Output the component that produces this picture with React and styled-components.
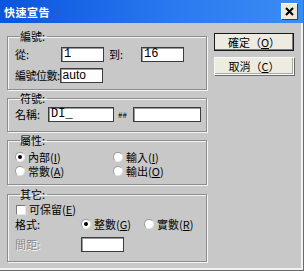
import React from 'react'
import styled, { createGlobalStyle } from 'styled-components'

const Global = createGlobalStyle`
  html, body { margin: 0; padding: 0; background: #c8c8c8; }
  body { font-family: "Noto Sans CJK TC", "Liberation Sans", sans-serif; font-size: 11px; color: #000; }
`

const Window = styled.div`
  width: 304px;
  height: 271px;
  display: flex;
  flex-direction: column;
  background: #c8c8c8;
  box-sizing: border-box;
  border-right: 1px solid #6a6a6a;
  border-bottom: 1px solid #6a6a6a;
  box-shadow: inset -2px -2px 0 #f2f2f2;
  overflow: hidden;
`

const TitleBar = styled.div`
  height: 23px;
  flex: none;
  display: flex;
  align-items: center;
  justify-content: space-between;
  padding: 0 5px 0 4px;
  background: linear-gradient(to right, #0b54de, #2a7cf0 60%, #3b8cf4);
`

const Title = styled.span`
  color: #fff;
  font-weight: bold;
  font-size: 11px;
  letter-spacing: 0.5px;
`

const CloseBtn = styled.div`
  width: 15px;
  height: 15px;
  background: #ece9d8;
  border: 1px solid #fff;
  border-right-color: #404040;
  border-bottom-color: #404040;
  display: flex;
  align-items: center;
  justify-content: center;
`

const Body = styled.div`
  flex: 1;
  display: flex;
  padding: 7px 0 0 7px;
  gap: 7px;
`

const Left = styled.div`
  width: 200px;
  display: flex;
  flex-direction: column;
`

const Group = styled.fieldset`
  margin: ${p => p.$mt || 0}px 0 0 0;
  padding: ${p => p.$pt || 0}px 7px ${p => p.$pb || 0}px 7px;
  border: 1px solid #8c8c8c;
  box-shadow: 1px 1px 0 #f4f4f4, inset 1px 1px 0 #f4f4f4;
  min-width: 0;
  display: flex;
  flex-direction: column;
  gap: ${p => p.$gap || 0}px;
`

const Legend = styled.legend`
  padding: 0 2px 0 0;
  margin-left: 5px;
  line-height: 13px;
  font-size: 11px;
`

const Row = styled.div`
  display: flex;
  align-items: center;
  height: ${p => p.$h || 15}px;
`

const Label = styled.span`
  width: ${p => (p.$w ? `${p.$w}px` : 'auto')};
  flex: none;
  white-space: nowrap;
  line-height: 13px;
  font-size: ${p => p.$fs || 11}px;
  letter-spacing: ${p => p.$ls || 0}px;
  margin-left: ${p => p.$ml || 0}px;
  color: ${p => (p.$disabled ? '#8a8a8a' : '#000')};
  text-shadow: ${p => (p.$disabled ? '1px 1px 0 #f4f4f4' : 'none')};
`

const Input = styled.div`
  width: ${p => p.$w}px;
  height: 15px;
  box-sizing: border-box;
  background: #fff;
  border: 1px solid #3c3c3c;
  box-shadow: inset 1px 1px 0 #9a9a9a;
  padding-left: 2px;
  font-family: ${p => (p.$sans ? '"Liberation Sans", sans-serif' : '"Liberation Mono", monospace')};
  font-size: 12px;
  line-height: 13px;
  flex: none;
`

const RadioItem = styled.div`
  display: flex;
  align-items: center;
  width: ${p => (p.$w ? `${p.$w}px` : 'auto')};
  flex: none;
  white-space: nowrap;
  line-height: 13px;
`

const RadioDot = styled.span`
  width: 10px;
  height: 10px;
  border-radius: 50%;
  box-sizing: border-box;
  background: #fff;
  border: 1px solid #9a9a9a;
  border-right-color: #e8e8e8;
  border-bottom-color: #e8e8e8;
  margin-right: 3px;
  display: flex;
  align-items: center;
  justify-content: center;
  flex: none;
  &::after {
    content: '';
    width: 4px;
    height: 4px;
    border-radius: 50%;
    background: ${p => (p.$on ? '#000' : 'transparent')};
  }
`

const Check = styled.span`
  width: 10px;
  height: 10px;
  box-sizing: border-box;
  background: #fff;
  border: 1px solid #7a7a7a;
  border-right-color: #e8e8e8;
  border-bottom-color: #e8e8e8;
  margin: 0 3px 0 1px;
  flex: none;
`

const Text = styled.span`
  line-height: 13px;
  white-space: nowrap;
`

const Right = styled.div`
  width: 80px;
  display: flex;
  flex-direction: column;
  gap: 6px;
  padding-top: 3px;
`

const Button = styled.div`
  height: 18px;
  box-sizing: border-box;
  background: #eeebe0;
  border: 1px solid ${p => (p.$default ? '#1a1a1a' : '#f8f8f8')};
  box-shadow: ${p => (p.$default ? 'inset -1px -1px 0 #7a7a7a' : '1px 1px 0 #6a6a6a, inset -1px -1px 0 #a8a8a8')};
  display: flex;
  align-items: center;
  justify-content: center;
  line-height: 13px;
  white-space: nowrap;
`

const Radio = ({ on, w, children }) => (
  <RadioItem $w={w}>
    <RadioDot $on={on} />
    <Text>{children}</Text>
  </RadioItem>
)

export default function App() {
  return (
    <>
      <Global />
      <Window>
        <TitleBar>
          <Title>快速宣告</Title>
          <CloseBtn>
            <svg width="9" height="9" viewBox="0 0 9 9">
              <path d="M1 1 L8 8 M8 1 L1 8" stroke="#000" strokeWidth="2" />
            </svg>
          </CloseBtn>
        </TitleBar>
        <Body>
          <Left>
            <Group $pt={4} $pb={6} $gap={6}>
              <Legend>編號:</Legend>
              <Row>
                <Label $w={46}>從:</Label>
                <Input $w={43}>1</Input>
                <Label $w={32} $ml={5}>到:</Label>
                <Input $w={43}>16</Input>
              </Row>
              <Row>
                <Label $ls={-0.5}>編號位數:</Label>
                <Input $w={43} $sans>auto</Input>
              </Row>
            </Group>
            <Group $mt={2} $pt={2} $pb={9}>
              <Legend>符號:</Legend>
              <Row>
                <Label $w={33}>名稱:</Label>
                <Input $w={66}>DI_</Input>
                <Label $w={15} $ml={4} $fs={8}>##</Label>
                <Input $w={68}></Input>
              </Row>
            </Group>
            <Group $mt={2} $pt={3} $pb={6}>
              <Legend>屬性:</Legend>
              <Row $h={14}>
                <Radio on w={98}>內部(<u>I</u>)</Radio>
                <Radio>輸入(<u>I</u>)</Radio>
              </Row>
              <Row $h={14}>
                <Radio w={98}>常數(<u>A</u>)</Radio>
                <Radio>輸出(<u>O</u>)</Radio>
              </Row>
            </Group>
            <Group $mt={3} $pt={2} $pb={9} $gap={1}>
              <Legend>其它:</Legend>
              <Row $h={13}>
                <Check />
                <Text>可保留(<u>E</u>)</Text>
              </Row>
              <Row $h={14}>
                <Label $w={66}>格式:</Label>
                <Radio on w={63}>整數(<u>G</u>)</Radio>
                <Radio>實數(<u>R</u>)</Radio>
              </Row>
              <Row style={{ marginTop: 5 }}>
                <Label $w={66} $disabled>間距:</Label>
                <Input $w={43}></Input>
              </Row>
            </Group>
          </Left>
          <Right>
            <Button $default>確定（<u>O</u>）</Button>
            <Button>取消（<u>C</u>）</Button>
          </Right>
        </Body>
      </Window>
    </>
  )
}
